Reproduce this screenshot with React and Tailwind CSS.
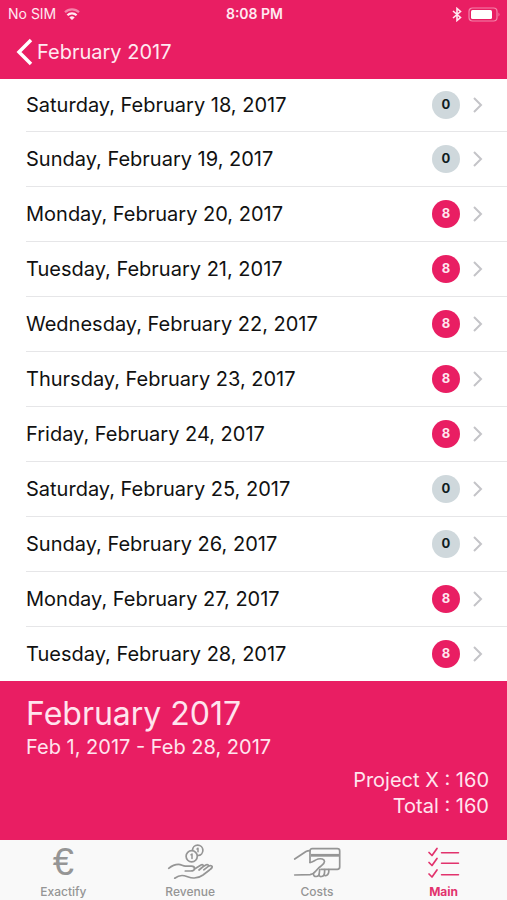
import React from 'react'
import clsx from 'clsx'

const days = [
  { label: 'Saturday, February 18, 2017', hours: 0 },
  { label: 'Sunday, February 19, 2017', hours: 0 },
  { label: 'Monday, February 20, 2017', hours: 8 },
  { label: 'Tuesday, February 21, 2017', hours: 8 },
  { label: 'Wednesday, February 22, 2017', hours: 8 },
  { label: 'Thursday, February 23, 2017', hours: 8 },
  { label: 'Friday, February 24, 2017', hours: 8 },
  { label: 'Saturday, February 25, 2017', hours: 0 },
  { label: 'Sunday, February 26, 2017', hours: 0 },
  { label: 'Monday, February 27, 2017', hours: 8 },
  { label: 'Tuesday, February 28, 2017', hours: 8 }
]

const tabs = [
  { name: 'Exactify', icon: EuroIcon },
  { name: 'Revenue', icon: RevenueIcon },
  { name: 'Costs', icon: CostsIcon },
  { name: 'Main', icon: ChecklistIcon, active: true }
]

function EuroIcon() {
  return (
    <span aria-hidden="true" className="font-['Liberation_Sans',sans-serif] text-[38px] leading-10">
      €
    </span>
  )
}

function RevenueIcon() {
  return (
    <svg width="48" height="40" viewBox="0 0 48 40" fill="none" stroke="currentColor" strokeWidth="1.7" strokeLinecap="round" strokeLinejoin="round">
      <circle cx="25.700" cy="14.300" r="5.600" />
      <path d="M26.500 8.200a5.200 5.200 0 1 1 5.500 5.300" />
      <path d="M25 12.800l1-.8v4.500M31 7l1-.8v3.500" strokeWidth="1.500" />
      <path d="M2.700 26.300C6 23.500 9 22.300 12.500 22.300c3 0 4 1.700 7 1.800h6c2 0 3 1 3 2.400 0 1.700-1.500 2.500-4 2.500h-5.200" />
      <path d="M28.500 27l6.500-4c1.500-.8 3 .2 2.300 1.500L33 28M37.300 24.500l3-1.700c1.500-.7 2.700.3 2 1.500 2-1.300 4.700-.5 3.700 1.200-.5 1-1.500 1.700-2.500 2.500l-6.500 5c-3 2.200-6 3.200-9.500 3-4.500-.2-7.500-2.500-11.500-2.500-3 0-5 1-7.300 2.700M42.300 24.300l-4.500 3.500" />
    </svg>
  )
}

function CostsIcon() {
  return (
    <svg width="48" height="40" viewBox="0 0 48 40" fill="none" stroke="currentColor" strokeWidth="1.7" strokeLinecap="round" strokeLinejoin="round">
      <path d="M17 20.500V9q0-2.300 2.300-2.300h25q2.400 0 2.400 2.300v16q0 2.300-2.400 2.300H28" />
      <path d="M18 13.300h28" strokeWidth="2.800" strokeLinecap="butt" />
      <path d="M1.700 17L13 9.500q1.500-.8 4-.8" />
      <path d="M17 20.500c3-.2 5-2.700 8-3.500 3-.7 6.500 0 6.500 2.500 0 2-2 3.300-3.500 4.500-2 1.500-3.500 3-4.700 4.500-1.600 2-3 4-6.300 4.200L1.700 33" />
      <path d="M20.500 31.500c-.3 2 1 3.200 2.800 3 2 0 3-1.500 3-3.500l.4-3.500M26 32.500c0 1.500 1 2.200 2.500 2 2 0 2.800-1.500 3-3.500l.2-3.500M31 32.500c.3 1 1.200 1.300 2.300 1 2-.5 2.700-2.500 2.500-6" />
    </svg>
  )
}

function ChecklistIcon() {
  return (
    <svg width="48" height="40" viewBox="0 0 48 40" fill="none" stroke="currentColor" strokeWidth="1.7" strokeLinecap="round" strokeLinejoin="round">
      <path d="M9 10.500l3 3 5-7M9 20.500l3 3 5-7M9 32l3 3 5-7" />
      <path d="M21.500 10.700h17M21.500 21.200h17M21.500 32.700h17" strokeWidth="1.500" />
    </svg>
  )
}

function WifiIcon() {
  return (
    <svg width="16" height="12" viewBox="0 0 16 12" fill="none" stroke="currentColor" strokeWidth="2.200">
      <path d="M1 4.200a10 10 0 0 1 14 0" opacity="0.5" />
      <path d="M3.400 7.200a6.500 6.500 0 0 1 9.200 0" />
      <path d="M8 12L5.300 9.500a3.800 3.800 0 0 1 5.400 0z" fill="currentColor" stroke="none" />
    </svg>
  )
}

function BluetoothIcon() {
  return (
    <svg width="10" height="15" viewBox="0 0 10 15" fill="none" stroke="currentColor" strokeWidth="1.600">
      <path d="M1 4l7.500 6.500L5 13.500v-12l3.500 3L1 11" />
    </svg>
  )
}

function BatteryIcon() {
  return (
    <svg width="33" height="15" viewBox="0 0 33 15" fill="none">
      <rect x="1" y="1" width="28" height="13" rx="3.500" stroke="currentColor" strokeWidth="1.200" opacity="0.5" />
      <rect x="3" y="3" width="21" height="9" rx="1.500" fill="#ffffff" />
      <path d="M30.500 5.500q2 2 0 4z" fill="currentColor" opacity="0.5" />
    </svg>
  )
}

/**
 * DayRow - one day of the month with its booked hours
 */
function DayRow({ label, hours }) {
  return (
    <li className="group h-[55px] pl-[26px] first:h-[53px] last:h-[54px]">
      <a href="#day" className="flex h-full items-center border-b border-[#e6e6e8] pr-6 group-last:border-b-0">
        <span className="flex-1 text-xl text-[#111111]">{label}</span>
        <span
          className={clsx(
            'flex size-7 items-center justify-center rounded-full text-[13px] font-bold',
            hours > 0 ? 'bg-[#e91e63] text-[#ffe4ee]' : 'bg-[#cfd8dc] text-[#111d22]'
          )}
        >
          {hours}
        </span>
        <svg className="ml-3 text-[#c4c4c8]" width="11" height="16" viewBox="0 0 11 16" fill="none" stroke="currentColor" strokeWidth="2">
          <path d="M2 1l7 7-7 7" />
        </svg>
      </a>
    </li>
  )
}

function App() {
  return (
    <div className="flex min-h-screen flex-col bg-white font-[Inter,sans-serif]">
      <header className="h-[79px] bg-[#e91e63] text-[#ffe9f1]">
        {/* Status bar */}
        <div className="grid h-7 grid-cols-3 items-center pl-2 pr-1.5 text-sm">
          <div className="flex items-center gap-2">
            No SIM
            <WifiIcon />
          </div>
          <span className="text-center font-semibold">8:08 PM</span>
          <div className="flex items-center justify-end gap-1.5">
            <BluetoothIcon />
            <BatteryIcon />
          </div>
        </div>

        {/* Back navigation */}
        <button type="button" className="flex h-12 items-center gap-1 pl-4 text-xl">
          <svg className="text-white" width="17" height="28" viewBox="0 0 17 28" fill="none" stroke="currentColor" strokeWidth="3.500">
            <path d="M15 2L3 14l12 12" />
          </svg>
          February 2017
        </button>
      </header>

      <main className="flex-1">
        <ul>
          {days.map((day) => (
            <DayRow key={day.label} label={day.label} hours={day.hours} />
          ))}
        </ul>
      </main>

      {/* Month summary */}
      <section className="h-[159px] bg-[#e91e63] pl-[26px] pr-[18px] pt-3 text-xl text-[#ffe4ee]">
        <h1 className="text-[32px] leading-[42px]">February 2017</h1>
        <p className="leading-6">Feb 1, 2017 - Feb 28, 2017</p>
        <div className="pt-2 text-right leading-[26px]">
          <p>Project X : 160</p>
          <p>Total : 160</p>
        </div>
      </section>

      {/* Tab bar */}
      <nav className="grid h-[60px] grid-cols-4 bg-[#f9f9f9]">
        {tabs.map(({ name, icon: Icon, active }) => (
          <a
            key={name}
            href={`#${name.toLowerCase()}`}
            className={clsx('flex flex-col items-center', active ? 'text-[#e2336d]' : 'text-[#959595]')}
          >
            <span className="flex h-11 items-center justify-center">
              <Icon />
            </span>
            <span className={clsx('text-xs leading-4', active ? 'font-bold' : 'font-medium')}>{name}</span>
          </a>
        ))}
      </nav>
    </div>
  )
}

export default App
